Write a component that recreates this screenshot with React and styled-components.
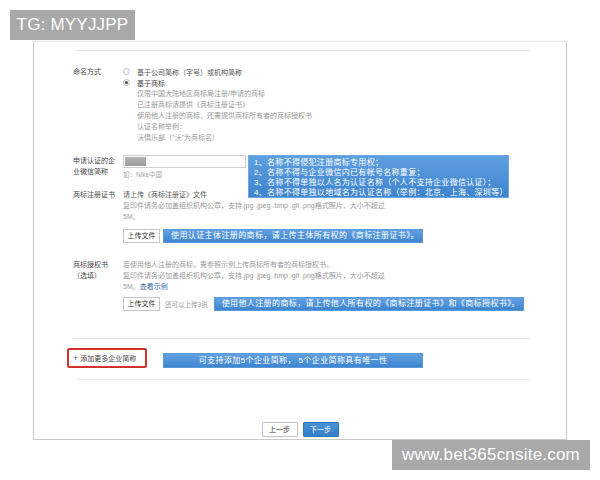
import React from 'react';
import styled, { createGlobalStyle } from 'styled-components';

const GlobalStyle = createGlobalStyle`
  * { box-sizing: border-box; }
  body {
    margin: 0;
    background: #fff;
    font-family: "Liberation Sans", "Noto Sans CJK SC", sans-serif;
  }
`;

const Page = styled.div`
  width: 600px;
  height: 480px;
  padding-top: 10px;
  display: flex;
  flex-direction: column;
  align-items: flex-start;
  overflow: hidden;
`;

const Tag = styled.div`
  height: 30px;
  width: ${p => p.$w}px;
  margin-left: ${p => p.$left}px;
  background: #a9a9a9;
  color: #fff;
  font-size: 17px;
  line-height: 30px;
  text-align: center;
  letter-spacing: 0.2px;
`;

const Frame = styled.div`
  margin: 1px 0 0 33px;
  width: 534px;
  height: 399px;
  border: 1px solid #c9c9c9;
  border-top-color: #e6e6e6;
  display: flex;
  flex-direction: column;
`;

const Rule = styled.div`
  height: 1px;
  margin: ${p => p.$top}px 36px 0 ${p => p.$left}px;
  background: #ebebeb;
`;

const FormRow = styled.div`
  position: relative;
  margin: ${p => p.$top}px 0 0 39px;
  display: grid;
  grid-template-columns: 50px 1fr;
`;

const Label = styled.div`
  font-size: 7px;
  line-height: 11px;
  color: #4a4a4a;
  white-space: nowrap;
`;

const Field = styled.div`
  display: flex;
  flex-direction: column;
`;

const Line = styled.div`
  font-size: 7px;
  line-height: 11px;
  white-space: nowrap;
  color: ${p => (p.$dark ? '#555' : '#999')};
  padding-left: ${p => p.$indent || 0}px;
`;

const RadioLine = styled.div`
  display: flex;
  align-items: center;
  height: 11px;
  font-size: 7px;
  color: ${p => (p.$checked ? '#444' : '#555')};
`;

const Radio = styled.span`
  width: 7px;
  height: 7px;
  margin-right: 7px;
  border-radius: 50%;
  border: 1px solid #c4c4c4;
  background: #f6f6f6;
  display: flex;
  align-items: center;
  justify-content: center;
  &::after {
    content: '';
    width: 3px;
    height: 3px;
    border-radius: 50%;
    background: ${p => (p.$checked ? '#555' : 'transparent')};
  }
`;

const Link = styled.span`
  color: #3366a8;
`;

const NameInput = styled.div`
  width: 123px;
  height: 13px;
  border: 1px solid #cfcfcf;
  background: #fff;
  display: flex;
  padding: 1px;
`;

const Redact = styled.div`
  width: 21px;
  background: linear-gradient(#b4b4b4, #9c9c9c);
`;

const Hint = styled.div`
  margin-top: 1px;
  font-size: 6.5px;
  line-height: 11px;
  color: #a5a5a5;
`;

const Callout = styled.div`
  position: absolute;
  top: 0;
  left: 175px;
  width: 261px;
  height: 43px;
  padding: 2px 0 0 5px;
  background: linear-gradient(#5e9fe0, #3f84cf);
  border: 1px solid #6ea8e2;
  color: #fff;
  font-size: 8px;
  line-height: 10px;
  letter-spacing: 0.3px;
  white-space: nowrap;
`;

const UploadRow = styled.div`
  margin-top: ${p => p.$top}px;
  display: flex;
  align-items: center;
  height: 14px;
`;

const UploadBtn = styled.div`
  width: 37px;
  height: 14px;
  border: 1px solid #c6c6c6;
  background: #fff;
  font-size: 7px;
  line-height: 12px;
  color: #333;
  text-align: center;
`;

const Note = styled.span`
  margin: 0 6px 0 5px;
  font-size: 6.5px;
  color: #999;
`;

const Banner = styled.div`
  width: ${p => p.$w}px;
  height: ${p => p.$h || 14}px;
  margin-left: ${p => p.$gap || 0}px;
  padding-left: ${p => (p.$center ? 0 : 7)}px;
  background: linear-gradient(#62a1e1, #3e85cf);
  border: 1px solid #5b9ad9;
  color: #fff;
  font-size: 8px;
  line-height: ${p => (p.$h || 14) - 2}px;
  letter-spacing: ${p => p.$ls || 0.4}px;
  text-align: ${p => (p.$center ? 'center' : 'left')};
  white-space: nowrap;
`;

const AddRow = styled.div`
  margin: 9px 0 0 33px;
  display: flex;
  align-items: flex-end;
`;

const AddLink = styled.div`
  width: 80px;
  height: 20px;
  border: 2px solid #d3312c;
  border-radius: 2px;
  padding-left: 4px;
  display: flex;
  align-items: center;
  gap: 2px;
  font-size: 7px;
  color: #444;
  span {
    font-size: 9px;
    color: #666;
  }
`;

const Footer = styled.div`
  margin-top: 42px;
  display: flex;
  justify-content: center;
  gap: 5px;
`;

const StepBtn = styled.div`
  width: 36px;
  height: 15px;
  border: 1px solid ${p => (p.$primary ? '#2f76bd' : '#c2c2c2')};
  border-radius: 1px;
  background: ${p => (p.$primary ? 'linear-gradient(#4690d6, #3580c9)' : '#fff')};
  color: ${p => (p.$primary ? '#fff' : '#333')};
  font-size: 7px;
  line-height: 13px;
  text-align: center;
`;

const fileRule = '复印件请务必加盖组织机构公章，支持.jpg .jpeg .bmp .gif .png格式照片，大小不超过';

const rules = [
  '1、名称不得侵犯注册商标专用权；',
  '2、名称不得与企业微信内已有帐号名称重复；',
  '3、名称不得单独以人名为认证名称（个人不支持企业微信认证）；',
  '4、名称不得单独以地域名为认证名称（举例：北京、上海、深圳等）',
];

export default function App() {
  return (
    <Page>
      <GlobalStyle />
      <Tag $w={125} $left={10}>TG: MYYJJPP</Tag>
      <Frame>
        <Rule $top={8} $left={41} />

        <FormRow $top={15}>
          <Label>命名方式</Label>
          <Field>
            <RadioLine><Radio />基于公司简称（字号）或机构简称</RadioLine>
            <RadioLine $checked><Radio $checked />基于商标</RadioLine>
            <Line $indent={14}>仅限中国大陆地区商标局注册/申请的商标</Line>
            <Line $indent={14}>已注册商标请提供《商标注册证书》</Line>
            <Line $indent={14}>使用他人注册的商标，还需提供商标所有者的商标授权书</Line>
            <Line $indent={14}>认证名称举例：</Line>
            <Line $indent={14}>沃倶乐部（"沃"为商标名）</Line>
          </Field>
        </FormRow>

        <FormRow $top={12}>
          <Label>申请认证的企<br />业微信简称</Label>
          <Field>
            <NameInput><Redact /></NameInput>
            <Hint>如：Nike中国</Hint>
          </Field>
          <Callout>
            {rules.map(r => <div key={r}>{r}</div>)}
          </Callout>
        </FormRow>

        <FormRow $top={9}>
          <Label>商标注册证书</Label>
          <Field>
            <Line $dark>请上传《商标注册证》文件</Line>
            <Line>{fileRule}</Line>
            <Line>5M。</Line>
            <UploadRow $top={7}>
              <UploadBtn>上传文件</UploadBtn>
              <Banner $w={260} $gap={3}>使用认证主体注册的商标，请上传主体所有权的《商标注册证书》。</Banner>
            </UploadRow>
          </Field>
        </FormRow>

        <FormRow $top={16}>
          <Label>商标授权书<br />（选填）</Label>
          <Field>
            <Line>若使用他人注册的商标，需参照示例上传商标所有者的商标授权书。</Line>
            <Line>{fileRule}</Line>
            <Line>5M。<Link>查看示例</Link></Line>
            <UploadRow $top={5}>
              <UploadBtn>上传文件</UploadBtn>
              <Note>还可以上传3张</Note>
              <Banner $w={310} $ls={0.4}>使用他人注册的商标，请上传他人所有权的《商标注册证书》和《商标授权书》。</Banner>
            </UploadRow>
          </Field>
        </FormRow>

        <Rule $top={27} $left={39} />

        <AddRow>
          <AddLink><span>+</span>添加更多企业简称</AddLink>
          <Banner $w={260} $h={15} $gap={16} $center>可支持添加5个企业简称， 5个企业简称具有唯一性</Banner>
        </AddRow>

        <Rule $top={11} $left={43} />

        <Footer>
          <StepBtn>上一步</StepBtn>
          <StepBtn $primary>下一步</StepBtn>
        </Footer>
      </Frame>
      <Tag $w={198} $left={392}>www.bet365cnsite.com</Tag>
    </Page>
  );
}
